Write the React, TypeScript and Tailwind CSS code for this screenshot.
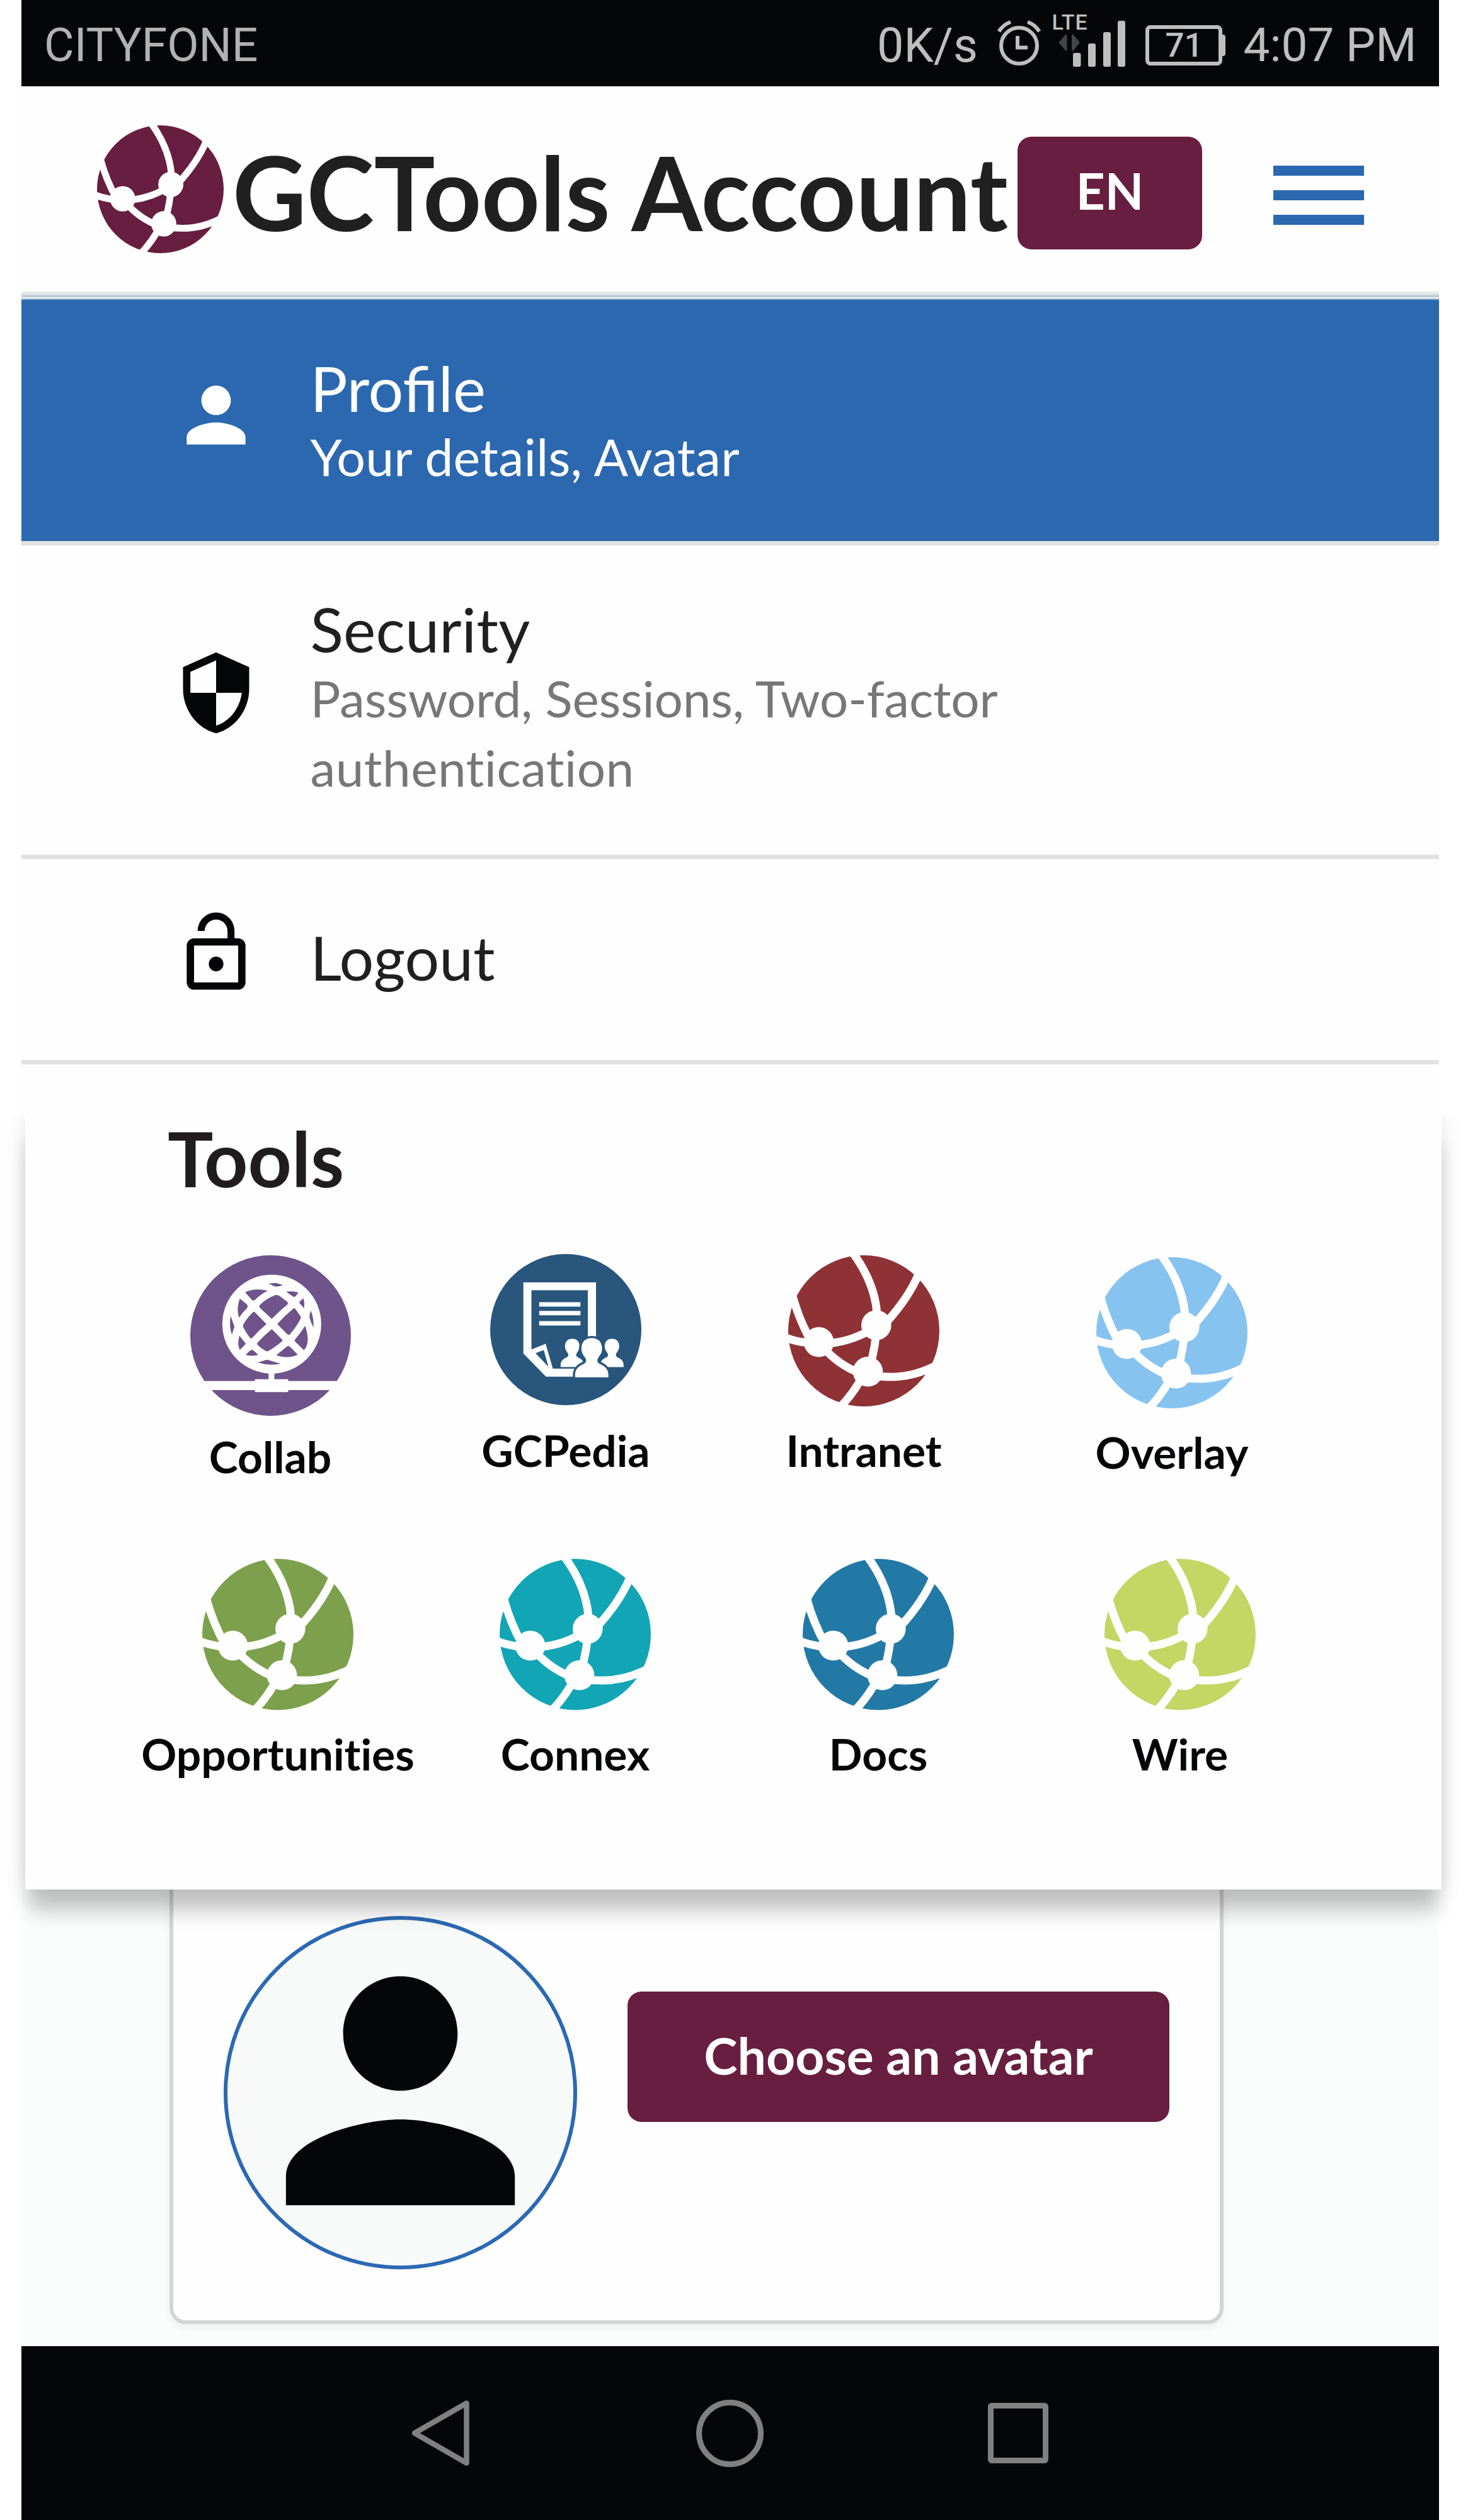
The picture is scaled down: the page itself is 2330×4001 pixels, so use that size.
import React from 'react';
import { MdLockOpen, MdPerson, MdSecurity } from 'react-icons/md';

function GlobeLogo({ className }: { className: string }) {
  return (
    <svg viewBox="0 0 240 240" preserveAspectRatio="none" className={className}>
      <circle cx="120" cy="120" r="120" fill="currentColor" />
      <g fill="none" stroke="#fefefe" strokeWidth="12.8">
        <path d="M101 -6 Q137 42 141 92" />
        <path d="M213 12 Q200 60 148 115" />
        <path d="M3 48 Q12 92 36 136" />
        <path d="M-6 130 Q20 140 46 140 Q90 142 130 119" />
        <path d="M140 118 Q139 142 130 176" />
        <path d="M54 144 Q78 174 118 189" />
        <path d="M136 191 Q190 200 240 172" />
        <path d="M120 188 Q106 217 80 244" />
      </g>
      <g fill="#fefefe">
        <circle cx="139.8" cy="111" r="23.8" />
        <circle cx="48.6" cy="137.8" r="23.8" />
        <circle cx="126.5" cy="184.8" r="23.8" />
      </g>
    </svg>
  );
}

function CollabIcon() {
  return (
    <svg viewBox="34 39 765 765" className="h-[255px] w-[255px]">
      <circle cx="416.5" cy="421.5" r="382.5" fill="#6f548b" />
      <g fill="#fefefe">
        <circle cx="422" cy="366.5" r="235.5" />
        <path d="M385 590 Q408 598 407 608 L407 632 L434 632 L434 608 Q433 598 460 590 Z" />
        <rect x="34" y="638" width="765" height="43" />
        <rect x="341" y="629" width="160" height="62" rx="6" />
      </g>
      <g fill="#6f548b">
        <path d="M407 173 L442 171 L474 180 Q462 188 440 188 Q425 184 407 173Z" />
        <path d="M295 215 Q340 192 403 208 Q370 224 344 250 Q334 260 326 250Z" />
        <path d="M490 212 Q525 208 549 217 L535 235 Q528 240 520 233Z" />
        <path d="M270 245 L304 273 Q310 282 304 291 Q280 313 266 337 Q252 290 270 245Z" />
        <path d="M364 277 Q395 245 440 228 Q452 227 460 233 L497 262 Q502 267 495 275 Q460 303 422 342 L364 288 Q361 282 364 277Z" />
        <path d="M573 244 Q580 268 576 292 L555 268 Q552 263 556 258Z" />
        <path d="M608 303 Q622 335 621 382 Q610 365 602 335 Q600 318 608 303Z" />
        <path d="M226 327 L243 375 Q245 382 242 387 L232 417 Q218 375 226 327Z" />
        <path d="M335 308 Q338 307 341 310 L397 367 Q360 398 330 431 Q325 437 319 433 Q300 410 286 382 Q284 376 286 370 Q305 335 335 308Z" />
        <path d="M527 291 Q532 291 536 297 L558 328 Q562 333 560 340 Q540 380 508 416 Q503 420 498 417 L448 367 Q485 325 527 291Z" />
        <path d="M581 375 Q600 430 590 465 Q585 482 575 491 L531 448 Q528 444 533 440 Q560 408 581 375Z" />
        <path d="M268 422 L297 458 Q299 462 295 465 L270 490 Q256 465 268 422Z" />
        <path d="M422 391 L472 441 Q476 445 470 450 Q440 475 408 494 Q400 498 392 494 Q370 482 353 464 Q350 460 353 457 Q385 422 422 391Z" />
        <path d="M326 488 Q338 492 357 513 Q330 522 298 514 Q310 497 326 488Z" />
        <path d="M502 471 L511 477 L546 512 Q500 535 443 515 L490 477 Q496 471 502 471Z" />
        <path d="M400 536 L465 556 Q410 567 355 550Z" />
      </g>
    </svg>
  );
}

function PediaIcon() {
  const bust =
    'M0 0 C8.5 0 11.5 6 11.5 12 C11.5 17 9 20 7 23 Q5 27 8 29 C15 32 18.5 36 18.5 42 V45 H-18.5 V42 C-18.5 36 -15 32 -8 29 Q-5 27 -7 23 C-9 20 -11.5 17 -11.5 12 C-11.5 6 -8.5 0 0 0Z';
  return (
    <svg viewBox="0 0 240 240" className="h-60 w-60">
      <circle cx="120" cy="120" r="120" fill="#28567c" />
      <path
        fill="#fefefe"
        fillRule="evenodd"
        d="M52.7 45 H168 V140 H155 V57.5 H65.5 V151.6 L88 142.5 L99.5 182 H140 V194.7 H88.6 L52.7 158Z M72 157.6 L92.5 179 L85 152.4Z"
      />
      <g fill="#fefefe">
        <rect x="77.8" y="76.5" width="65.5" height="7" />
        <rect x="77.8" y="90.3" width="65.5" height="7" />
        <rect x="77.8" y="106.5" width="65.5" height="7" />
        <path d={bust} transform="translate(130.3 134.6)" />
        <path d={bust} transform="translate(193.3 134.6)" />
      </g>
      <path
        d={bust}
        transform="translate(161.2 133.5) scale(1.43 1.39)"
        fill="#28567c"
        stroke="#28567c"
        strokeWidth="5"
      />
      <path d={bust} transform="translate(161.2 133.5) scale(1.43 1.385)" fill="#fefefe" />
    </svg>
  );
}

function Tool({
  label,
  className,
  children,
}: {
  label: string;
  className: string;
  children: React.ReactNode;
}) {
  return (
    <div className={`flex flex-col items-center ${className}`}>
      {children}
      <span className="text-[69.5px] leading-[84px] font-bold text-[#050607] [font-variant-ligatures:none]">{label}</span>
    </div>
  );
}

function StatusBar() {
  return (
    <div className="flex h-[137px] items-start justify-between bg-[#050607] font-[Roboto,sans-serif] whitespace-nowrap text-[#bebebe]">
      <span className="mt-[36px] ml-9 text-[73.2px] leading-none text-[#b2b2b2]">CITYFONE</span>
      <div className="flex w-[892px] items-start">
        <span className="mt-[35px] w-[190.5px] shrink-0 text-[75.5px] leading-none">0K/s</span>
        <svg viewBox="0 0 70 72" className="mt-8 h-[72px] w-[70px] shrink-0" fill="none" stroke="currentColor" strokeWidth="6">
          <circle cx="34.5" cy="40.5" r="28.5" />
          <path d="M2.5 18 Q9 7 21 3" />
          <path d="M48 3 Q60 7 66.5 18" />
          <path d="M32 25 V43.5 H48" />
        </svg>
        <div className="relative ml-[18px] h-[110px] w-[115px] shrink-0">
          <svg viewBox="0 0 115 110" className="h-[110px] w-[115px]" fill="currentColor">
            <path d="M11.5 67.5 L21 56 V79Z M41 67.5 L31.5 56 V79Z" fill="#444444" stroke="#444444" strokeWidth="3" strokeLinejoin="round" />
            <rect x="32" y="84" width="12.5" height="22" rx="3" />
            <rect x="56" y="69" width="12" height="37" rx="3" />
            <rect x="80" y="51" width="12" height="55" rx="3" />
            <rect x="103" y="33" width="12" height="73" rx="3" />
          </svg>
          <span className="absolute top-[18px] left-[-1px] text-[34px] leading-none font-medium tracking-[1px]">LTE</span>
        </div>
        <div className="mt-10 ml-[32px] flex shrink-0 items-center">
          <div className="flex h-16 w-[122px] items-center rounded-lg border-[6px] border-[#bebebe] pl-[26px] text-[53px] leading-none font-medium">
            71
          </div>
          <div className="h-[34px] w-[5px] rounded-r-sm bg-[#bebebe]" />
        </div>
        <span className="mt-[35px] ml-[29px] text-[74.7px] leading-none">4:07 PM</span>
      </div>
    </div>
  );
}

function Header() {
  return (
    <div className="flex h-[325px] items-start pl-[120px]">
      <GlobeLogo className="mt-[62px] h-[203px] w-[201px] shrink-0 text-[#671e40]" />
      <h1 className="mt-[87px] ml-3.5 w-[1246px] shrink-0 text-[162px] leading-none font-bold tracking-[-0.1px] whitespace-nowrap text-[#202020]">
        GCTools Account
      </h1>
      <button className="mt-[80px] flex h-[179px] w-[293px] shrink-0 items-center justify-center rounded-[22px] bg-[#671e40] pb-2.5 text-[80px] leading-none font-bold text-white">
        EN
      </button>
      <div className="mt-[126px] ml-[113px] flex flex-col gap-[23px]">
        <div className="h-4 w-36 bg-[#2b68b0]" />
        <div className="h-4 w-36 bg-[#2b68b0]" />
        <div className="h-4 w-36 bg-[#2b68b0]" />
      </div>
    </div>
  );
}

export default function App() {
  return (
    <div className="h-[4001px] w-[2330px] overflow-hidden bg-white font-[Lato,sans-serif]">
      <div className="ml-[34px] flex w-[2250px] flex-col bg-[#fefefe]">
        <StatusBar />
        <Header />
        <div className="h-[3px] bg-[#f0f0f0]" />
        <div className="h-1 bg-[#e0e2e1]" />
        <div className="h-0.5 bg-[#abc3df]" />
        <div className="h-1 bg-[#e0e2e1]" />
        <div className="h-0.5 bg-[#4584c6]" />

        <div className="flex h-[389px] items-start border-b-[7px] border-[#e0e2e1] bg-[#2b68b0] pl-[238.5px] text-white">
          <MdPerson className="mt-28 size-[140px] shrink-0" />
          <div className="mt-[85px] ml-20">
            <div className="text-[98.5px] leading-[109px]">Profile</div>
            <div className="text-[80.5px] leading-[108px] tracking-[0.3px]">Your details, Avatar</div>
          </div>
        </div>

        <div className="flex h-[498px] items-start border-b-[7px] border-[#e1e1e1] pl-[238.5px]">
          <MdSecurity className="mt-[164px] size-[140px] shrink-0 text-[#050607]" />
          <div className="mt-[78px] ml-20 w-[1200px]">
            <div className="text-[97px] leading-[109px] tracking-[0.2px] text-[#202020]">Security</div>
            <div className="text-[80px] leading-[110px] tracking-[-0.15px] text-[#777777] [font-variant-ligatures:none]">
              Password, Sessions, Two-factor <span className="tracking-[0.5px]">authentication</span>
            </div>
          </div>
        </div>

        <div className="flex h-[326px] items-start border-b-[7px] border-[#e1e1e1] pl-[238.5px]">
          <MdLockOpen className="mt-[79px] size-[140px] shrink-0 text-[#050607]" />
          <div className="mt-[102px] ml-20 text-[96.5px] leading-[109px] text-[#202020]">Logout</div>
        </div>

        <div className="relative z-10 mt-[81px] ml-1.5 h-[1229px] w-[2248px] bg-[#fefefe] pt-2 shadow-[0_40px_30px_-6px_rgba(0,0,0,0.22),0_0_36px_rgba(0,0,0,0.1)] [clip-path:inset(0_-60px_-100px_-60px)]">
          <h2 className="ml-[226px] h-[120px] text-[121px] leading-[120px] font-bold text-[#211d1e]">Tools</h2>
          <div className="mt-[92px] ml-[154px] grid h-[363px] grid-cols-[470px_468px_478px_500px] items-start">
            <Tool label="Collab" className="gap-[22px] pt-0.5">
              <CollabIcon />
            </Tool>
            <Tool label="GCPedia" className="gap-[29px]">
              <PediaIcon />
            </Tool>
            <Tool label="Intranet" className="gap-[27px] pt-0.5">
              <GlobeLogo className="h-60 w-60 text-[#8f3235]" />
            </Tool>
            <Tool label="Overlay" className="gap-[27px] pt-[5px]">
              <GlobeLogo className="h-60 w-60 text-[#87c3ef]" />
            </Tool>
          </div>
          <div className="mt-[121px] ml-[161px] grid grid-cols-[480px_464px_498px_460px] items-start">
            <Tool label="Opportunities" className="gap-[27px]">
              <GlobeLogo className="h-60 w-60 text-[#7da04c]" />
            </Tool>
            <Tool label="Connex" className="gap-[27px]">
              <GlobeLogo className="h-60 w-60 text-[#12a5b5]" />
            </Tool>
            <Tool label="Docs" className="gap-[27px]">
              <GlobeLogo className="h-60 w-60 text-[#2279a5]" />
            </Tool>
            <Tool label="Wire" className="gap-[27px]">
              <GlobeLogo className="h-60 w-60 text-[#c4d664]" />
            </Tool>
          </div>
        </div>

        <div className="h-[725px] bg-[#fbfdfc]">
          <div className="ml-[235px] flex h-[690px] w-[1673px] items-start rounded-b-[26px] border-x-[6px] border-b-[6px] border-[#d4d4d4] bg-[#fefefe] pl-20 shadow-[0_6px_14px_rgba(0,0,0,0.06)]">
            <div className="mt-[42px] flex size-[561px] shrink-0 items-center justify-center rounded-full border-[6px] border-[#2b69b3] bg-[#f8faf9] pb-1.5">
              <MdPerson className="size-[545px] shrink-0 text-[#050607]" />
            </div>
            <button className="mt-[162px] ml-20 flex h-[207px] w-[860px] items-center justify-center rounded-[22px] bg-[#671e40] pb-1 text-[80.5px] leading-none font-bold text-white">
              Choose an avatar
            </button>
          </div>
        </div>

        <div className="flex h-[276px] items-center bg-[#050607] pl-[619px] text-[#808080]">
          <svg viewBox="0 0 92 106" className="h-[106px] w-[92px]" fill="none" stroke="currentColor" strokeWidth="8.5" strokeLinejoin="round">
            <path d="M87.5 5.5 V100.5 L5 53Z" />
          </svg>
          <div className="ml-[360px] size-[107px] rounded-full border-[9px] border-[#808080]" />
          <div className="ml-[356px] size-24 rounded-md border-[9px] border-[#808080]" />
        </div>
      </div>
    </div>
  );
}
